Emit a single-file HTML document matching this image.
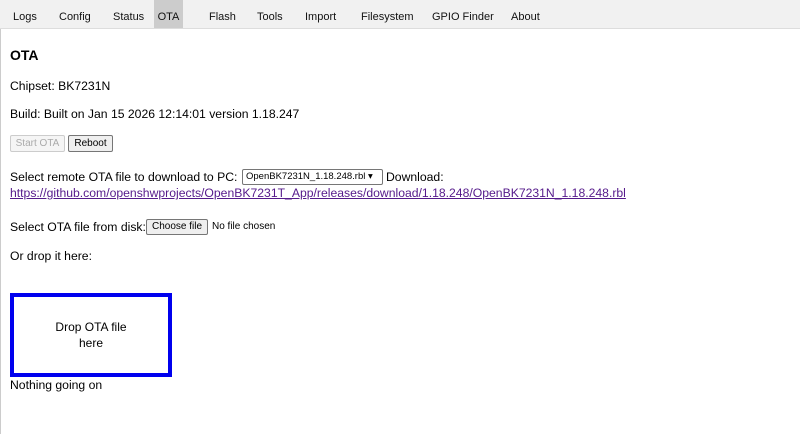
<!DOCTYPE html>
<html><head><style>
body{margin:0;width:800px;height:434px;overflow:hidden;background:#fff;font-family:"Liberation Sans",sans-serif;color:#000;position:relative}
.bar{position:absolute;left:0;top:0;width:800px;height:28px;background:#f1f1f1;border-bottom:1px solid #ddd}
.tab{position:absolute;top:0;height:28px;line-height:35px;font-size:11px;color:#111}
.act{background:#ccc}
.t{position:absolute;font-size:12.2px;white-space:nowrap}
.btn{position:absolute;font-size:10px;border:1px solid #767676;border-radius:2px;background:#efefef;box-sizing:border-box;text-align:center}
a{color:#551a8b}
.lb{position:absolute;left:0;top:29px;width:1px;height:405px;background:#ccc}
</style></head><body>
<div class="bar">
<div class="tab" style="left:13px">Logs</div>
<div class="tab" style="left:59px">Config</div>
<div class="tab" style="left:113px">Status</div>
<div class="tab act" style="left:154px;width:29px;text-align:center">OTA</div>
<div class="tab" style="left:209px">Flash</div>
<div class="tab" style="left:257px">Tools</div>
<div class="tab" style="left:305px">Import</div>
<div class="tab" style="left:361px">Filesystem</div>
<div class="tab" style="left:432px">GPIO Finder</div>
<div class="tab" style="left:511px">About</div>
</div>
<div class="lb"></div>
<div class="t" style="left:10px;top:47px;font-weight:bold;font-size:14px">OTA</div>
<div class="t" style="left:10px;top:79px">Chipset: BK7231N</div>
<div class="t" style="left:10px;top:107px">Build: Built on Jan 15 2026 12:14:01 version 1.18.247</div>
<div class="btn" style="left:10px;top:135px;width:55px;height:17px;line-height:15px;color:#aaa;border-color:#ccc;background:#f5f5f5">Start OTA</div>
<div class="btn" style="left:68px;top:135px;width:45px;height:17px;line-height:15px">Reboot</div>
<div class="t" style="left:10px;top:170px">Select remote OTA file to download to PC: </div>
<div class="btn" style="left:242px;top:169px;width:141px;height:16px;line-height:14px;background:#fff;font-size:9.5px;text-align:left;padding-left:3px">OpenBK7231N_1.18.248.rbl ▾</div>
<div class="t" style="left:386px;top:170px">Download:</div>
<div class="t" style="left:10px;top:186px"><a href="#">https://github.com/openshwprojects/OpenBK7231T_App/releases/download/1.18.248/OpenBK7231N_1.18.248.rbl</a></div>
<div class="t" style="left:10px;top:220px">Select OTA file from disk:</div>
<div class="btn" style="left:146px;top:219px;width:62px;height:16px;line-height:14px">Choose file</div>
<div class="t" style="left:212px;top:221px;font-size:10px">No file chosen</div>
<div class="t" style="left:10px;top:249px">Or drop it here:</div>
<div style="position:absolute;left:10px;top:293px;width:154px;height:76px;border:4px solid #0000ee;font-size:12px;text-align:center;display:flex;align-items:center;justify-content:center;line-height:16px">Drop OTA file<br>here</div>
<div class="t" style="left:10px;top:378px">Nothing going on</div>
</body></html>
